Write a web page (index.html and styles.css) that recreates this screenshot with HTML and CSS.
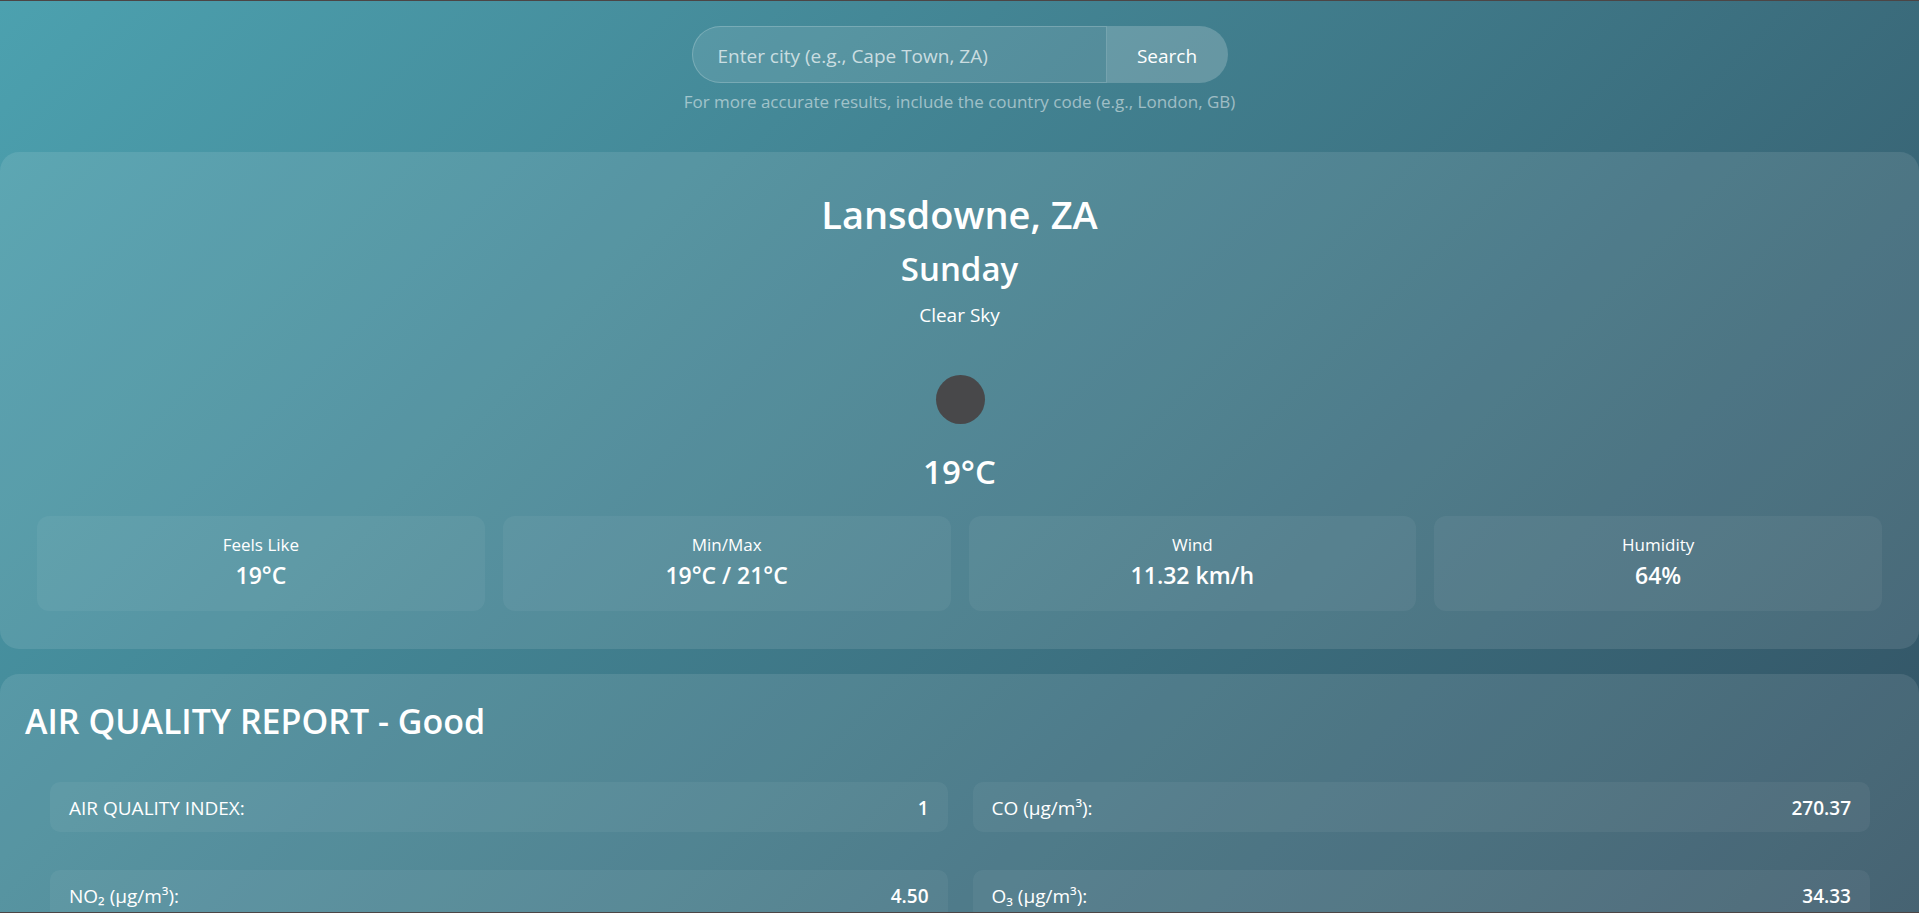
FILE: index.html
```html
<!DOCTYPE html>
<html lang="en">
<head>
<meta charset="utf-8">
<meta name="viewport" content="width=device-width, initial-scale=1">
<title>Weather</title>
<link rel="stylesheet" href="styles.css">
</head>
<body>
<div class="app">
  <form class="search">
    <div class="search-bar">
      <input class="search-input" type="text" aria-label="City" placeholder="Enter city (e.g., Cape Town, ZA)">
      <button class="search-button" type="button">Search</button>
    </div>
    <p class="search-hint">For more accurate results, include the country code (e.g., London, GB)</p>
  </form>

  <main class="panels">
    <section class="card weather">
      <h1 class="city">Lansdowne, ZA</h1>
      <h2 class="day">Sunday</h2>
      <p class="condition">Clear Sky</p>
      <svg class="weather-icon" viewBox="0 0 120 120" role="img" aria-label="Clear night"><circle cx="60.5" cy="59.5" r="24.5" fill="#48484a"/></svg>
      <p class="temperature">19°C</p>
      <dl class="stats">
        <div class="stat"><dt class="stat-label">Feels Like</dt><dd class="stat-value">19°C</dd></div>
        <div class="stat"><dt class="stat-label">Min/Max</dt><dd class="stat-value">19°C / 21°C</dd></div>
        <div class="stat"><dt class="stat-label">Wind</dt><dd class="stat-value">11.32 km/h</dd></div>
        <div class="stat"><dt class="stat-label">Humidity</dt><dd class="stat-value">64%</dd></div>
      </dl>
    </section>

    <section class="card air">
      <h2 class="air-title">AIR QUALITY REPORT - Good</h2>
      <dl class="readings">
        <div class="reading"><dt>AIR QUALITY INDEX:</dt><dd class="reading-value">1</dd></div>
        <div class="reading"><dt>CO (µg/m³):</dt><dd class="reading-value">270.37</dd></div>
        <div class="reading"><dt>NO₂ (µg/m³):</dt><dd class="reading-value">4.50</dd></div>
        <div class="reading"><dt>O₃ (µg/m³):</dt><dd class="reading-value">34.33</dd></div>
      </dl>
    </section>
  </main>
</div>
</body>
</html>
```
FILE: styles.css
```css
* {
  box-sizing: border-box;
  margin: 0;
  padding: 0;
}

body {
  font-family: "Segoe UI", "Open Sans", "Noto Sans", sans-serif;
  font-size: 19px;
  line-height: 26px;
  color: #fff;
}

.app {
  height: 100vh;
  overflow: hidden;
  border-top: 1px solid #4c4545;
  border-bottom: 1px solid #4c4545;
  background: linear-gradient(135deg, #4ca1af, #2c3e50) 0 0 / 100% 1620px no-repeat;
}

.search {
  display: flex;
  flex-direction: column;
  align-items: center;
  padding: 25px 0 37px;
  gap: 6px;
}

.search-bar {
  display: flex;
  width: 100%;
  max-width: 536px;
  height: 57px;
}

.search-input {
  flex: 1;
  min-width: 0;
  padding: 2px 25px 0;
  border: 1px solid rgba(255, 255, 255, 0.2);
  border-radius: 30px 0 0 30px;
  background: rgba(255, 255, 255, 0.1);
  color: #fff;
  font: inherit;
}

.search-input::placeholder {
  color: rgba(255, 255, 255, 0.7);
}

.search-button {
  width: 121px;
  padding-top: 2px;
  border: 0;
  border-radius: 0 30px 30px 0;
  background: rgba(255, 255, 255, 0.2);
  color: #fff;
  font: inherit;
}

.search-hint {
  font-size: 17px;
  color: rgba(255, 255, 255, 0.5);
}

.panels {
  display: flex;
  flex-direction: column;
  gap: 25px;
}

.card {
  border-radius: 19px;
  background: rgba(255, 255, 255, 0.1);
}

.weather {
  display: flex;
  flex-direction: column;
  align-items: center;
  padding: 37px 37px 38px;
}

.city {
  font-size: 38px;
  font-weight: 600;
  line-height: 50px;
}

.day {
  margin-top: 7px;
  font-size: 33px;
  font-weight: 600;
  line-height: 46px;
}

.condition {
  margin-top: 10px;
}

.weather-icon {
  width: 120px;
  height: 120px;
  margin-top: 12px;
}

.temperature {
  font-size: 33px;
  font-weight: 600;
  line-height: 24px;
}

.stats {
  display: grid;
  grid-template-columns: repeat(4, 1fr);
  gap: 18px;
  width: 100%;
  margin-top: 32px;
}

.stat {
  padding: 16px 19px 19px;
  border-radius: 12px;
  background: rgba(255, 255, 255, 0.05);
  text-align: center;
}

.stat-label {
  font-size: 17px;
}

.stat-value {
  font-size: 23px;
  font-weight: 600;
  line-height: 34px;
}

.air {
  padding: 24px 24px 24px 25px;
}

.air-title {
  font-size: 34px;
  font-weight: 600;
  line-height: 46px;
}

.readings {
  display: grid;
  grid-template-columns: repeat(2, 1fr);
  gap: 38px 25px;
  padding: 38px 25px 25px;
}

.reading {
  display: flex;
  justify-content: space-between;
  padding: 13px 19px 11px;
  border-radius: 10px;
  background: rgba(255, 255, 255, 0.05);
}

.reading-value {
  font-weight: 600;
}
```
